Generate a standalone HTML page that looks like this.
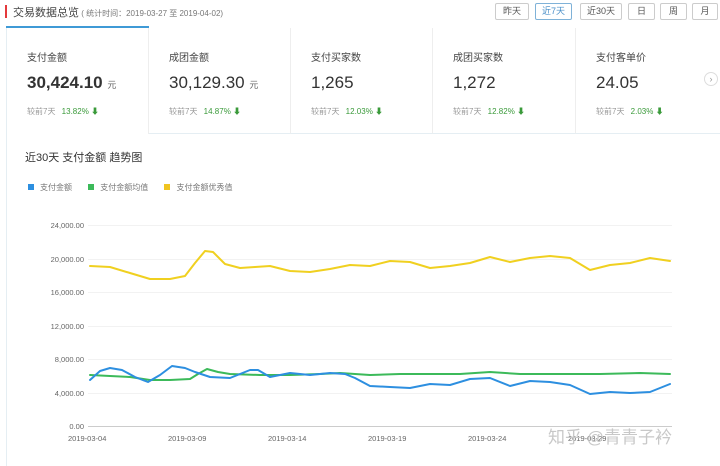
<!DOCTYPE html>
<html><head><meta charset="utf-8"><style>
*{margin:0;padding:0;box-sizing:border-box}
body{width:720px;height:466px;background:#fff;font-family:"Liberation Sans","Noto Sans CJK SC",sans-serif;color:#333;position:relative;overflow:hidden}
.abs{position:absolute}
.btn{position:absolute;top:3px;height:17px;border:1px solid #ccc;border-radius:2px;font-size:9px;color:#555;text-align:center;line-height:15px}
.card{position:absolute;top:28px;height:106px;border-right:1px solid #eee;border-bottom:1px solid #e5eef3}
.card .t{position:absolute;left:20px;top:21px;font-size:10px;color:#444}
.card .v{position:absolute;left:20px;top:45px;font-size:17px;color:#333}
.card .v small{font-size:9px;color:#666}
.card .c{position:absolute;left:20px;top:78px;font-size:8px;color:#999}
.card .c b{color:#3a9a3a;font-weight:normal;margin-left:4px}
.yl{position:absolute;left:40px;width:44px;text-align:right;font-size:7.5px;color:#666}
.xl{position:absolute;top:434px;font-size:7.5px;color:#666}
</style></head><body>
<div class="abs" style="left:5px;top:5px;width:2px;height:13px;background:#e4393c"></div>
<div class="abs" style="left:13px;top:4px;font-size:11px;color:#444">交易数据总览<span style="font-size:8px;color:#777"> ( 统计时间：2019-03-27 至 2019-04-02)</span></div>
<div class="btn" style="left:495px;width:34px">昨天</div>
<div class="btn" style="left:535px;width:37px;border-color:#7fb2d8;color:#4a8fc8">近7天</div>
<div class="btn" style="left:580px;width:42px">近30天</div>
<div class="btn" style="left:628px;width:27px">日</div>
<div class="btn" style="left:660px;width:27px">周</div>
<div class="btn" style="left:692px;width:26px">月</div>
<div class="abs" style="left:6px;top:26px;width:143px;height:2px;background:#3f9ad6"></div>
<div class="card" style="left:6px;width:143px;border-left:1px solid #e5eef3;border-bottom:none"><div class="t">支付金额</div><div class="v" style="font-weight:bold">30,424.10 <small style="font-weight:normal">元</small></div><div class="c">较前7天 <b>13.82% ⬇</b></div></div>
<div class="card" style="left:149px;width:142px"><div class="t">成团金额</div><div class="v">30,129.30 <small>元</small></div><div class="c">较前7天 <b>14.87% ⬇</b></div></div>
<div class="card" style="left:291px;width:142px"><div class="t">支付买家数</div><div class="v">1,265</div><div class="c">较前7天 <b>12.03% ⬇</b></div></div>
<div class="card" style="left:433px;width:143px"><div class="t">成团买家数</div><div class="v">1,272</div><div class="c">较前7天 <b>12.82% ⬇</b></div></div>
<div class="card" style="left:576px;width:144px;border-right:none"><div class="t">支付客单价</div><div class="v">24.05</div><div class="c">较前7天 <b>2.03% ⬇</b></div></div>
<div class="abs" style="left:704px;top:72px;width:14px;height:14px;border:1px solid #ddd;border-radius:50%;font-size:9px;color:#999;text-align:center;line-height:12px">›</div>
<div class="abs" style="left:6px;top:134px;width:1px;height:332px;background:#e5eef3"></div>
<div class="abs" style="left:25px;top:149px;font-size:11px;color:#333">近30天 支付金额 趋势图</div>
<div class="abs" style="left:28px;top:182px;font-size:8px;color:#777;white-space:nowrap">
<span style="display:inline-block;width:6px;height:6px;background:#2d8fe0;margin-right:6px"></span>支付金额
<span style="display:inline-block;width:6px;height:6px;background:#3cba5a;margin:0 6px 0 14px"></span>支付金额均值
<span style="display:inline-block;width:6px;height:6px;background:#f0c420;margin:0 6px 0 14px"></span>支付金额优秀值</div>
<div class="yl" style="top:221px">24,000.00</div>
<div class="yl" style="top:255px">20,000.00</div>
<div class="yl" style="top:288px">16,000.00</div>
<div class="yl" style="top:322px">12,000.00</div>
<div class="yl" style="top:355px">8,000.00</div>
<div class="yl" style="top:389px">4,000.00</div>
<div class="yl" style="top:422px">0.00</div>
<div class="xl" style="left:68px">2019-03-04</div>
<div class="xl" style="left:168px">2019-03-09</div>
<div class="xl" style="left:268px">2019-03-14</div>
<div class="xl" style="left:368px">2019-03-19</div>
<div class="xl" style="left:468px">2019-03-24</div>
<div class="xl" style="left:568px">2019-03-29</div>
<svg class="abs" style="left:0;top:0" width="720" height="466">
<g stroke="#f2f2f2" stroke-width="1">
<line x1="88" y1="225.5" x2="672" y2="225.5"/><line x1="88" y1="259.5" x2="672" y2="259.5"/><line x1="88" y1="292.5" x2="672" y2="292.5"/><line x1="88" y1="326.5" x2="672" y2="326.5"/><line x1="88" y1="359.5" x2="672" y2="359.5"/><line x1="88" y1="393.5" x2="672" y2="393.5"/></g>
<line x1="88" y1="426.5" x2="672" y2="426.5" stroke="#ccc"/>
<g fill="none" stroke-width="2" stroke-linejoin="round" stroke-linecap="round">
<polyline stroke="#f0d020" points="90,266 110,267 130,273 150,279 170,279 185,276 195,263 205,251 213,252 225,264 240,268 255,267 270,266 290,271 310,272 330,269 350,265 370,266 390,261 410,262 430,268 450,266 470,263 490,257 510,262 530,258 550,256 570,258 590,270 610,265 630,263 650,258 670,261"/>
<polyline stroke="#3cba5a" points="90,375 110,376 130,377 150,380 170,380 190,379 198,374 207,369 218,372 230,374 260,375 290,375 320,374 340,373 370,375 400,374 430,374 460,374 490,372 520,374 560,374 600,374 640,373 670,374"/>
<polyline stroke="#2d8fe0" points="90,380 100,371 110,368 122,370 135,377 148,382 160,375 172,366 185,368 195,372 210,377 230,378 250,370 258,370 270,377 290,373 310,375 330,373 345,374 355,378 370,386 390,387 410,388 430,384 450,385 470,379 490,378 510,386 530,381 550,382 570,385 590,394 610,392 630,393 650,392 670,384"/>
</g></svg>
<div class="abs" style="left:548px;top:423px;font-size:17px;color:#c8c8c8;white-space:nowrap">知乎 @青青子衿</div>
</body></html>
